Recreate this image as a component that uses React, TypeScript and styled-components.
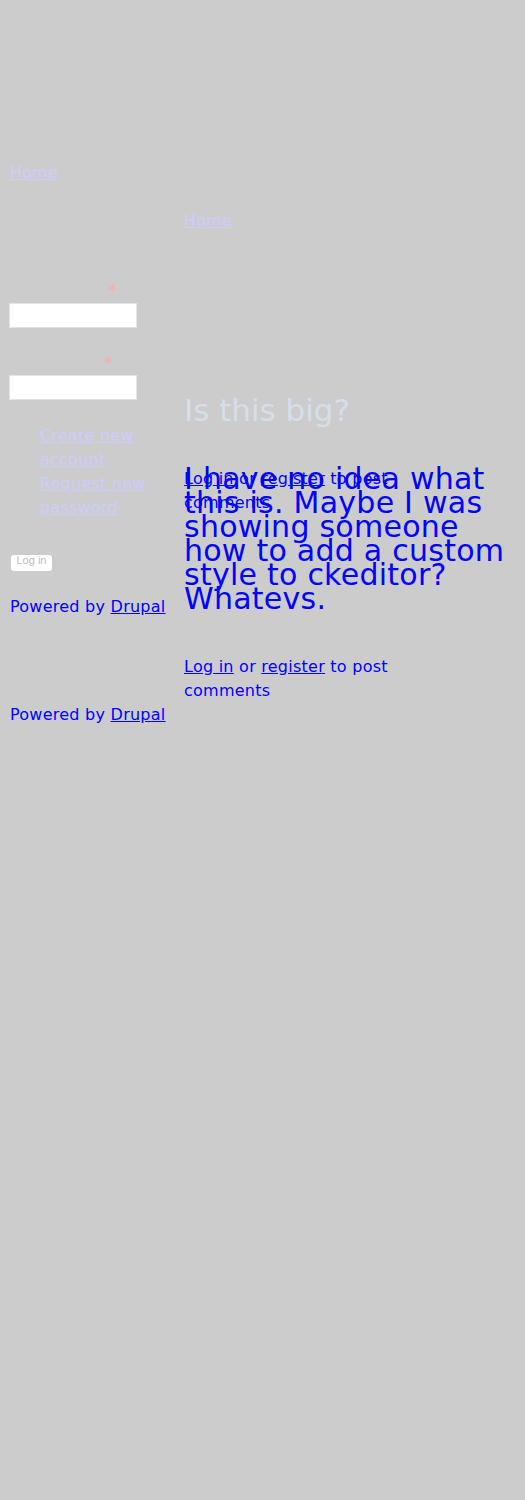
import React from "react";
import styled, { createGlobalStyle } from "styled-components";

const GlobalStyle = createGlobalStyle`
  html, body {
    margin: 0;
    padding: 0;
    background: #cccccc;
  }
  body {
    font-family: "DejaVu Sans", Verdana, sans-serif;
    font-size: 16px;
    line-height: 24px;
    letter-spacing: 0.25px;
    color: #0000ff;
  }
`;

const Page = styled.div`
  padding: 0 10px;
`;

const Header = styled.header`
  height: 161px;
`;

const Breadcrumb = styled.nav`
  line-height: 24px;
`;

const LightLink = styled.a`
  color: #ccccff;
  text-decoration: underline;
`;

const BlueLink = styled.a`
  color: #0000ff;
  text-decoration: underline;
`;

const Columns = styled.div`
  display: grid;
  grid-template-columns: 160px 1fr;
  column-gap: 14px;
  align-items: start;
`;

const Sidebar = styled.aside`
  padding-top: 94px;
`;

const FormItem = styled.div<{ $top: number }>`
  margin-top: ${(p) => p.$top}px;
`;

const FieldLabel = styled.label`
  display: block;
  font-weight: bold;
  color: #cccccc;
  line-height: 24px;
`;

const Required = styled.span`
  color: #f2b2b2;
`;

const TextInput = styled.input`
  display: block;
  box-sizing: border-box;
  width: 128px;
  height: 25px;
  margin: 0 0 0 -1px;
  padding: 0 4px;
  border: 1px solid #e4e4e4;
  background: #ffffff;
  outline: none;
`;

const LinkList = styled.ul`
  margin: 24px 0 0;
  padding: 0 0 0 30px;
  list-style: none;
  line-height: 24px;
`;

const LoginButton = styled.button`
  display: block;
  margin: 35px 0 0 1px;
  width: 41px;
  height: 16px;
  padding: 0 0 6px;
  border: none;
  border-radius: 3px;
  background: #ffffff;
  color: #bdbdbd;
  font-family: "Liberation Sans", Arial, sans-serif;
  font-size: 11px;
  line-height: 10px;
  letter-spacing: 0;
`;

const Powered = styled.p<{ $top?: number }>`
  margin: ${(p) => p.$top ?? 0}px 0 0;
  line-height: 24px;
  color: #0000ff;
`;

const Main = styled.main`
  padding-top: 24px;
`;

const Title = styled.h2`
  margin: 159px 0 0;
  font-size: 31px;
  line-height: 36px;
  font-weight: normal;
  letter-spacing: 0;
  color: #d6dee9;
`;

const Stack = styled.div`
  display: grid;
  margin-top: 39px;
  & > * {
    grid-area: 1 / 1;
  }
`;

const BodyText = styled.p`
  margin: 0;
  font-size: 30px;
  line-height: 24px;
  color: #0000ff;
`;

const CommentLinks = styled.p<{ $top?: number }>`
  margin: ${(p) => p.$top ?? 0}px 0 0;
  max-width: 16em;
  line-height: 24px;
  color: #0000ff;
`;

const Footer = styled.footer``;

function LoginOrRegister({ top }: { top?: number }) {
  return (
    <CommentLinks $top={top}>
      <BlueLink href="#">Log in</BlueLink> or <BlueLink href="#">register</BlueLink> to post comments
    </CommentLinks>
  );
}

export default function App() {
  return (
    <>
      <GlobalStyle />
      <Page>
        <Header />
        <Breadcrumb>
          <LightLink href="#">Home</LightLink>
        </Breadcrumb>
        <Columns>
          <Sidebar>
            <form onSubmit={(e) => e.preventDefault()}>
              <FormItem $top={0}>
                <FieldLabel htmlFor="name">
                  Username <Required>*</Required>
                </FieldLabel>
                <TextInput id="name" type="text" />
              </FormItem>
              <FormItem $top={23}>
                <FieldLabel htmlFor="pass">
                  Password <Required>*</Required>
                </FieldLabel>
                <TextInput id="pass" type="password" />
              </FormItem>
              <LinkList>
                <li>
                  <LightLink href="#">Create new account</LightLink>
                </li>
                <li>
                  <LightLink href="#">Request new password</LightLink>
                </li>
              </LinkList>
              <LoginButton type="submit">Log in</LoginButton>
            </form>
            <Powered $top={24}>
              Powered by <BlueLink href="#">Drupal</BlueLink>
            </Powered>
          </Sidebar>
          <Main>
            <Breadcrumb>
              <LightLink href="#">Home</LightLink>
            </Breadcrumb>
            <Title>Is this big?</Title>
            <Stack>
              <BodyText>
                I have no idea what this is. Maybe I was showing someone how to add a custom style to ckeditor? Whatevs.
              </BodyText>
              <LoginOrRegister />
            </Stack>
            <LoginOrRegister top={44} />
          </Main>
        </Columns>
        <Footer>
          <Powered>
            Powered by <BlueLink href="#">Drupal</BlueLink>
          </Powered>
        </Footer>
      </Page>
    </>
  );
}
